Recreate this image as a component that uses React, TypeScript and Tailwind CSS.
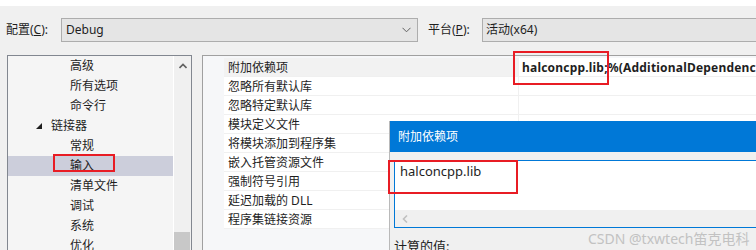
const font = { fontFamily: '"Noto Sans", "Noto Sans CJK SC", sans-serif' };

const treeItems = [
  { label: "高级", level: 2 },
  { label: "所有选项", level: 2 },
  { label: "命令行", level: 2 },
  { label: "链接器", level: 1 },
  { label: "常规", level: 2 },
  { label: "输入", level: 2, selected: true },
  { label: "清单文件", level: 2 },
  { label: "调试", level: 2 },
  { label: "系统", level: 2 },
  { label: "优化", level: 2 },
];

const props = [
  "附加依赖项",
  "忽略所有默认库",
  "忽略特定默认库",
  "模块定义文件",
  "将模块添加到程序集",
  "嵌入托管资源文件",
  "强制符号引用",
  "延迟加载的 DLL",
  "程序集链接资源",
];

function Chevron() {
  return (
    <svg width="9" height="6" viewBox="0 0 9 6" className="mr-[6px]">
      <path d="M0.5 0.8 L4.5 4.8 L8.5 0.8" fill="none" stroke="#606060" strokeWidth="1" />
    </svg>
  );
}

export default function App() {
  return (
    <div
      className="relative w-[756px] h-[250px] overflow-hidden bg-[#f0f0f0] text-[12px] text-[#1e1e1e]"
      style={font}
    >
      <div className="h-[6px] bg-white" />

      {/* config / platform */}
      <div className="flex items-center h-[24px] mt-[12px]">
        <div className="w-[61px] pl-[6px]">
          配置(<span className="underline">C</span>):
        </div>
        <div className="w-[357px] h-full flex items-center justify-between bg-[#e5e5e5] border border-[#adadad] pl-[4px]">
          <span>Debug</span>
          <Chevron />
        </div>
        <div className="w-[64px] pl-[10px]">
          平台(<span className="underline">P</span>):
        </div>
        <div className="flex-1 h-full flex items-center bg-[#e5e5e5] border border-r-0 border-[#adadad] pl-[3px]">
          活动(x64)
        </div>
      </div>

      <div className="flex mt-[13px] h-[200px]">
        {/* tree */}
        <div className="ml-[7px] w-[185px] border border-[#828790] bg-[#f5f5f5] flex">
          <div className="w-[165px]">
            {treeItems.map((it) => (
              <div
                key={it.label}
                className={`h-[20px] flex items-center ${it.selected ? "bg-[#cccedb]" : ""} ${
                  it.level === 1 ? "pl-[28px]" : "pl-[62px]"
                }`}
              >
                {it.level === 1 && (
                  <svg width="6" height="6" viewBox="0 0 6 6" className="mr-[9px]">
                    <path d="M6 0 L6 6 L0 6 Z" fill="#1e1e1e" />
                  </svg>
                )}
                {it.label}
              </div>
            ))}
          </div>
          <div className="w-[18px] bg-[#f0f0f0] border-l border-white flex flex-col">
            <div className="h-[17px] flex items-center justify-center pt-[2px]">
              <svg width="8" height="6" viewBox="0 0 8 6">
                <path d="M0.5 5 L4 1.5 L7.5 5" fill="none" stroke="#606060" strokeWidth="1.6" />
              </svg>
            </div>
            <div className="mt-[159px] mr-[1px] flex-1 bg-[#c8c8c8]" />
          </div>
        </div>

        {/* property grid */}
        <div className="ml-[10px] flex-1 border-l border-t border-[#a0a0a0] bg-[#f6f7f9] pt-[2px]">
          {props.map((p, i) => (
            <div key={p} className="flex h-[19px]">
              <div className="w-[21px]" />
              <div
                className={`w-[294px] flex items-center pl-[4px] pt-[1px] border-b border-[#f0f0f0] ${
                  i === 0 ? "bg-[#f2f2f2]" : "bg-white"
                }`}
              >
                {p}
              </div>
              <div className="flex-1 bg-white border-l border-b border-[#f0f0f0] flex items-center pl-[3px] pt-[1px] whitespace-nowrap overflow-hidden">
                {i === 0 && (
                  <span className="font-bold tracking-[0.2px]">halconcpp.lib;%(AdditionalDependencies)</span>
                )}
              </div>
            </div>
          ))}
        </div>
      </div>

      {/* dialog */}
      <div className="absolute left-[389px] top-[121px] right-0 bottom-0 bg-[#f0f0f0] border-l border-[#b9b9b9]">
        <div className="h-[31px] bg-[#0078d7] text-white flex items-center pl-[8px]">附加依赖项</div>
        <div className="pl-[4px] pt-[8px]">
          <div className="h-[68px] bg-white border border-r-0 border-[#0078d7] flex flex-col">
            <div className="flex-1 pl-[5px] pt-[1px] text-[13px] text-[#1e1e1e]">halconcpp.lib</div>
            <div className="h-[17px] bg-[#f0f0f0] flex items-center pl-[7px]">
              <svg width="6" height="8" viewBox="0 0 6 8">
                <path d="M5 0.5 L1.5 4 L5 7.5" fill="none" stroke="#c0c0c0" strokeWidth="1.6" />
              </svg>
            </div>
          </div>
          <div className="mt-[9px] text-[13px]">计算的值:</div>
        </div>
        <div className="absolute left-[198px] top-[107px] text-[14px] text-[#c2c2c2] whitespace-nowrap">
          CSDN @txwtech笛克电科
        </div>
      </div>

      {/* red annotations */}
      <div className="absolute left-[53px] top-[154px] w-[62px] h-[18px] border-2 border-[#e81c24]" />
      <div className="absolute left-[513px] top-[51px] w-[96px] h-[34px] border-2 border-[#e81c24]" />
      <div className="absolute left-[388px] top-[160px] w-[130px] h-[34px] border-2 border-[#e81c24]" />
    </div>
  );
}
